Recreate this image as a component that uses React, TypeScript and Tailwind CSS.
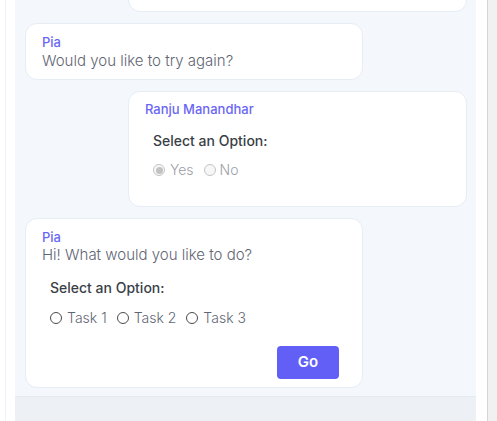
import React from "react";

type Side = "left" | "right";

function Radio({ checked = false, disabled = false }: { checked?: boolean; disabled?: boolean }) {
    return (
        <span
            className={`flex h-[12px] w-[12px] shrink-0 items-center justify-center rounded-full border ${
                disabled ? "border-[#c4c4c4] bg-[#f7f7f7]" : "border-[#4b4b4b] bg-white"
            }`}
        >
            {checked && <span className="h-[7px] w-[7px] rounded-full bg-[#c2c2c2]" />}
        </span>
    );
}

function Bubble({ side, className = "", children }: { side: Side; className?: string; children: React.ReactNode }) {
    return (
        <div
            className={`shrink-0 rounded-[12px] border border-[#e6edf5] bg-white ${
                side === "left" ? "mr-auto w-[338px]" : "ml-auto w-[339px]"
            } ${className}`}
        >
            {children}
        </div>
    );
}

function Sender({ name }: { name: string }) {
    return <div className="text-[13px] leading-[16px] font-medium text-[#6a67f5]">{name}</div>;
}

function OptionLabel() {
    return <div className="text-[14px] leading-[20px] font-medium text-[#3a3f47]">Select an Option:</div>;
}

export default function App(): React.ReactElement {
    return (
        <div
            className="flex h-[421px] w-[497px] overflow-hidden bg-white"
            style={{ fontFamily: "Inter, 'Open Sans', sans-serif" }}
        >
            <div className="w-[15px] shrink-0">
                <div className="ml-[5px] h-full border-l border-[#eef2f7]" />
            </div>

            <div className="flex w-[461px] shrink-0 flex-col">
                <div className="flex flex-1 flex-col justify-end gap-[11px] overflow-hidden bg-[#f4f7fb] pr-[9px] pb-[8px] pl-[10px]">
                    <Bubble side="right" className="h-[60px]">
                        <div />
                    </Bubble>

                    <Bubble side="left" className="px-4 pt-[10px] pb-[8px]">
                        <Sender name="Pia" />
                        <div className="text-[15px] leading-[21px] font-light text-[#5f6673]">Would you like to try again?</div>
                    </Bubble>

                    <Bubble side="right" className="px-4 pt-[9px] pb-[26px]">
                        <Sender name="Ranju Manandhar" />
                        <div className="mt-[14px] pl-2">
                            <OptionLabel />
                            <div className="mt-[9px] flex items-center text-[14px] leading-[20px] font-light text-[#9a9ea6]">
                                <Radio checked disabled />
                                <span className="ml-[5px]">Yes</span>
                                <span className="ml-[10px]">
                                    <Radio disabled />
                                </span>
                                <span className="ml-[4px]">No</span>
                            </div>
                        </div>
                    </Bubble>

                    <Bubble side="left" className="pt-[10px] pb-[8px] pl-4 pr-[23px]">
                        <Sender name="Pia" />
                        <div className="text-[15px] leading-[20px] font-light text-[#5f6673]">Hi! What would you like to do?</div>
                        <div className="mt-[13px] pl-2">
                            <OptionLabel />
                            <div className="mt-[10px] flex items-center text-[14px] leading-[20px] font-light text-[#5f6673]">
                                {["Task 1", "Task 2", "Task 3"].map((t, i) => (
                                    <div key={t} className={`flex items-center ${i > 0 ? "ml-[10px]" : ""}`}>
                                        <Radio />
                                        <span className="ml-[5px]">{t}</span>
                                    </div>
                                ))}
                            </div>
                        </div>
                        <div className="mt-[18px] flex justify-end">
                            <button className="h-[33px] w-[62px] rounded-[4px] bg-[#615ff6] text-[15px] font-semibold text-white">
                                Go
                            </button>
                        </div>
                    </Bubble>
                </div>
                <div className="h-[25px] shrink-0 border-t border-[#e4eaf1] bg-[#edf1f6]" />
            </div>

            <div className="w-[11px] shrink-0" />
            <div className="flex-1 border-l border-[#d6d6d6] bg-[#f1f1f1]" />
        </div>
    );
}
